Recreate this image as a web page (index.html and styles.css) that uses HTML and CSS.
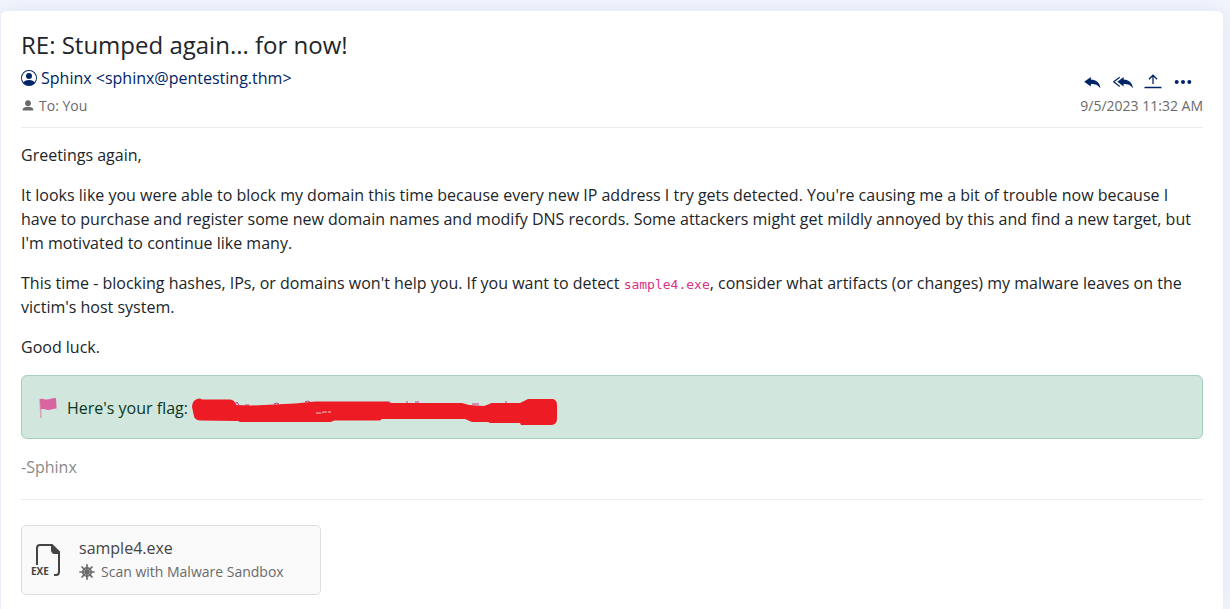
FILE: index.html
```html
<!DOCTYPE html>
<html lang="en">
<head>
<meta charset="utf-8">
<meta name="viewport" content="width=device-width, initial-scale=1">
<title>RE: Stumped again... for now!</title>
<link rel="stylesheet" href="styles.css">
</head>
<body>
<main class="mail">
  <header class="mail-head">
    <div class="mail-info">
      <h1 class="subject">RE: Stumped again... for now!</h1>
      <p class="sender">
        <svg class="sender-icon" viewBox="0 0 16 16" fill="currentColor" aria-hidden="true"><path d="M11 6a3 3 0 1 1-6 0 3 3 0 0 1 6 0"/><path fill-rule="evenodd" d="M0 8a8 8 0 1 1 16 0A8 8 0 0 1 0 8m8-7a7 7 0 0 0-5.468 11.37C3.242 11.226 4.805 10 8 10s4.757 1.225 5.468 2.37A7 7 0 0 0 8 1"/></svg>
        <span>Sphinx &lt;sphinx@pentesting.thm&gt;</span>
      </p>
      <p class="recipient">
        <svg class="recipient-icon" viewBox="0 0 14 14" fill="currentColor" aria-hidden="true"><circle cx="7" cy="4.200" r="2.900"/><path d="M1.800 11.600v-1.300C1.800 8.600 4 7.700 7 7.700s5.200.9 5.200 2.600v1.300z"/></svg>
        <span>To: You</span>
      </p>
    </div>
    <div class="mail-side">
      <div class="actions">
        <button class="action" type="button" aria-label="Reply"><svg viewBox="0 0 20 20" fill="currentColor"><path d="M1.200 9.800 7.800 5v2.500c5.600.2 9.300 3.400 9.600 9-2.400-3.600-5-4.400-9.600-4.400v2.500z"/></svg></button>
        <button class="action" type="button" aria-label="Reply all"><svg viewBox="0 0 20 20" fill="currentColor"><path d="M4.400 9.800 10.600 5v2.500c5.300.2 9 3.400 9.300 9-2.300-3.600-4.700-4.400-9.300-4.400v2.500z"/><path d="M6.700 5.200.700 9.800l6 4.600" fill="none" stroke="currentColor" stroke-width="1.200"/></svg></button>
        <button class="action" type="button" aria-label="Export"><svg viewBox="0 0 20 20" fill="none" stroke="currentColor" stroke-width="1.300"><path d="M10 12V3.200M6 7.200 10 3.200l4 4M1.500 15.500h17"/></svg></button>
        <button class="action" type="button" aria-label="More"><svg viewBox="0 0 20 20" fill="currentColor"><circle cx="3.700" cy="10" r="2"/><circle cx="10" cy="10" r="2"/><circle cx="16.300" cy="10" r="2"/></svg></button>
      </div>
      <time class="date" datetime="2023-09-05T11:32">9/5/2023 11:32 AM</time>
    </div>
  </header>
  <article class="body">
    <p>Greetings again,</p>
    <p>It looks like you were able to block my domain this time because every new IP address I try gets detected. You're causing me a bit of trouble now because I have to purchase and register some new domain names and modify DNS records. Some attackers might get mildly annoyed by this and find a new target, but I'm motivated to continue like many.</p>
    <p>This time - blocking hashes, IPs, or domains won't help you. If you want to detect <code>sample4.exe</code>, consider what artifacts (or changes) my malware leaves on the victim's host system.</p>
    <p>Good luck.</p>
    <div class="flag">
      <svg class="flag-icon" viewBox="0 0 20 24" aria-hidden="true"><path d="M2 3l1 19" stroke="#dba0bd" stroke-width="1.600" fill="none"/><path d="M2 3.200c3-1.600 5 .9 8 .3 3-.7 5-1.800 8-1.500l.6 10.400c-3.200-.2-5 1.200-8 1.500-3 .2-5-1.600-8-.3z" fill="#d9659f"/></svg>
      <span>Here's your flag:</span>
      <svg class="redaction" viewBox="0 0 366 28" role="img" aria-label="Redacted">
        <path d="M43 7l2-3 2 3M53 7h4M82 6q3-2 5 0M113 4q3-2 5 0M194 4h4M215 3v3M223 4h4M280 6h7M298 6h6M314 3v4" fill="none" stroke="#c8338a" stroke-width="1"/>
        <path d="M5 1Q8 0 10 1.500H38Q43 2 44 7L60 7.500 82 6.500 103 5.500 123 3.500 150 3.500H194L200 5H270L277 7 292 8 300 5H328L336 1H361Q365 2 365 7V21Q365 26 360 27H329L328 25H298L296 24H280L273 21H190L188 22.500H142L139 24H48L46 23 8 22.500Q2 22 1.500 16L0 9Q0 3 5 1Z" fill="#ed1c24"/>
        <path d="M124 15h5l3-1h7" fill="none" stroke="#ec8d91" stroke-width="1.500" stroke-dasharray="5 1"/>
      </svg>
    </div>
    <p class="signature">-Sphinx</p>
  </article>
  <footer class="attachments">
    <a class="attachment" href="#">
      <svg class="file-icon" viewBox="0 0 32 38" aria-hidden="true"><path d="M6 24V7q0-3 3-3h12l7 7v20q0 3-3 3h-2" fill="none" stroke="#444" stroke-width="2"/><path d="M20 3.500 29 11.500v1.500h-6q-3-1-3-4z" fill="#444"/><text class="file-type" x="0" y="34">EXE</text></svg>
      <span class="file-text">
        <span class="file-name">sample4.exe</span>
        <span class="scan">
          <svg class="scan-icon" viewBox="0 0 16 16" fill="none" stroke="currentColor" stroke-width="1.700" aria-hidden="true"><path d="M8 .3v15.400M.3 8h15.400M2.500 2.500l11 11M13.500 2.500l-11 11"/><circle cx="8" cy="8" r="4.200"/></svg>
          <span>Scan with Malware Sandbox</span>
        </span>
      </span>
    </a>
  </footer>
</main>
</body>
</html>
```
FILE: styles.css
```css
* { box-sizing: border-box; }
body {
  margin: 0;
  padding: 11px 7px 0 1px;
  background: #f2f5fd;
  color: #212529;
  font: 16px/24px "Open Sans", "Noto Sans", sans-serif;
}
p, h1 { margin: 0; }
.mail {
  padding: 19px 20px 14px;
  background: #fff;
  border-radius: 6px 6px 0 0;
  box-shadow: 0 0 20px #dde4f4;
}
.mail-head {
  display: flex;
  justify-content: space-between;
  align-items: flex-end;
  padding-bottom: 10px;
  border-bottom: 1px solid #ececec;
}
.subject { font-size: 24px; line-height: 30px; font-weight: 400; }
.sender { display: flex; align-items: center; gap: 4px; margin-top: 6px; color: #002567; }
.sender-icon { width: 16px; height: 16px; }
.recipient { display: flex; align-items: center; gap: 4px; margin-top: 5px; color: #6a6a6a; font-size: 14px; line-height: 22px; }
.recipient-icon { width: 14px; height: 14px; }
.mail-side { display: flex; flex-direction: column; align-items: flex-end; gap: 3px; }
.actions { display: flex; gap: 10px; padding-right: 10px; }
.action { display: flex; width: 20px; height: 20px; padding: 0; border: 0; background: none; color: #002567; cursor: pointer; }
.action svg { width: 20px; height: 20px; }
.date { color: #6a6a6a; font-size: 14px; line-height: 22px; }
.body { display: flex; flex-direction: column; gap: 16px; padding: 15px 0 20px; border-bottom: 1px solid #ececec; }
code { color: #d63384; font: 13px/16px "DejaVu Sans Mono", monospace; }
.flag {
  display: flex;
  align-items: center;
  min-height: 64px;
  padding: 14px 16px 12px;
  border: 1px solid #a3cfbb;
  border-radius: 6px;
  background: #d1e7dd;
  color: #0a3622;
}
.flag-icon { width: 20px; height: 24px; margin-right: 9px; }
.redaction { flex-shrink: 0; width: 366px; height: 28px; margin: 8px 0 0 4px; }
.signature { color: #8a8a8a; }
.attachments { padding-top: 25px; }
.attachment {
  display: flex;
  align-items: center;
  gap: 16px;
  width: 300px;
  height: 70px;
  padding: 0 9px;
  border: 1px solid #ddd;
  border-radius: 5px;
  background: #fafafa;
  color: #444;
  text-decoration: none;
}
.file-icon { width: 32px; height: 38px; }
.file-type { fill: #444; font: 700 10px "Open Sans", sans-serif; }
.file-text { display: flex; flex-direction: column; }
.scan { display: flex; align-items: center; gap: 6px; color: #6a6a6a; font-size: 14px; }
.scan-icon { width: 16px; height: 16px; }
```
